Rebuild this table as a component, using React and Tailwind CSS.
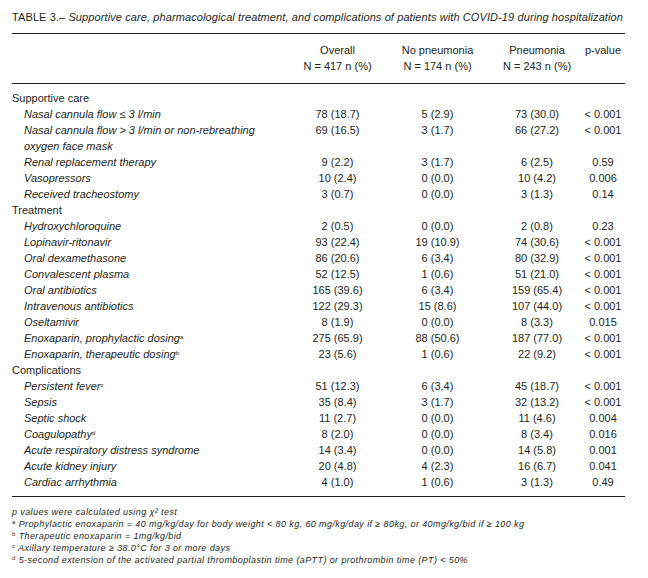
const sections = [
  {
    title: 'Supportive care',
    rows: [
      { label: 'Nasal cannula flow ≤ 3 l/min', v: ['78 (18.7)', '5 (2.9)', '73 (30.0)', '< 0.001'] },
      { label: 'Nasal cannula flow > 3 l/min or non-rebreathing', v: ['69 (16.5)', '3 (1.7)', '66 (27.2)', '< 0.001'] },
      { label: 'oxygen face mask', v: ['', '', '', ''] },
      { label: 'Renal replacement therapy', v: ['9 (2.2)', '3 (1.7)', '6 (2.5)', '0.59'] },
      { label: 'Vasopressors', v: ['10 (2.4)', '0 (0.0)', '10 (4.2)', '0.006'] },
      { label: 'Received tracheostomy', v: ['3 (0.7)', '0 (0.0)', '3 (1.3)', '0.14'] },
    ],
  },
  {
    title: 'Treatment',
    rows: [
      { label: 'Hydroxychloroquine', v: ['2 (0.5)', '0 (0.0)', '2 (0.8)', '0.23'] },
      { label: 'Lopinavir-ritonavir', v: ['93 (22.4)', '19 (10.9)', '74 (30.6)', '< 0.001'] },
      { label: 'Oral dexamethasone', v: ['86 (20.6)', '6 (3.4)', '80 (32.9)', '< 0.001'] },
      { label: 'Convalescent plasma', v: ['52 (12.5)', '1 (0.6)', '51 (21.0)', '< 0.001'] },
      { label: 'Oral antibiotics', v: ['165 (39.6)', '6 (3.4)', '159 (65.4)', '< 0.001'] },
      { label: 'Intravenous antibiotics', v: ['122 (29.3)', '15 (8.6)', '107 (44.0)', '< 0.001'] },
      { label: 'Oseltamivir', v: ['8 (1.9)', '0 (0.0)', '8 (3.3)', '0.015'] },
      { label: 'Enoxaparin, prophylactic dosing', sup: 'a', v: ['275 (65.9)', '88 (50.6)', '187 (77.0)', '< 0.001'] },
      { label: 'Enoxaparin, therapeutic dosing', sup: 'b', v: ['23 (5.6)', '1 (0.6)', '22 (9.2)', '< 0.001'] },
    ],
  },
  {
    title: 'Complications',
    rows: [
      { label: 'Persistent fever', sup: 'c', v: ['51 (12.3)', '6 (3.4)', '45 (18.7)', '< 0.001'] },
      { label: 'Sepsis', v: ['35 (8.4)', '3 (1.7)', '32 (13.2)', '< 0.001'] },
      { label: 'Septic shock', v: ['11 (2.7)', '0 (0.0)', '11 (4.6)', '0.004'] },
      { label: 'Coagulopathy', sup: 'd', v: ['8 (2.0)', '0 (0.0)', '8 (3.4)', '0.016'] },
      { label: 'Acute respiratory distress syndrome', v: ['14 (3.4)', '0 (0.0)', '14 (5.8)', '0.001'] },
      { label: 'Acute kidney injury', v: ['20 (4.8)', '4 (2.3)', '16 (6.7)', '0.041'] },
      { label: 'Cardiac arrhythmia', v: ['4 (1.0)', '1 (0.6)', '3 (1.3)', '0.49'] },
    ],
  },
];

const grid = 'grid grid-cols-[278px_95px_105px_94px_38px] pr-[3px]';

function Sup({ children }) {
  return (
    <span className="relative -top-[3px] text-[6px] leading-none not-italic">{children}</span>
  );
}

function Row({ row }) {
  return (
    <div className={`${grid} h-4 items-center leading-4`}>
      <div className="pl-3 italic whitespace-nowrap">
        {row.label}
        {row.sup && <Sup>{row.sup}</Sup>}
      </div>
      {row.v.map((x, i) => (
        <div key={i} className="text-center whitespace-nowrap">
          {x}
        </div>
      ))}
    </div>
  );
}

export default function App() {
  return (
    <div className="min-h-[578px] w-[648px] bg-white px-3 pt-[9px] text-[#231f20] font-['Liberation_Sans',Arial,sans-serif]">
      <div className="w-[613px]">
        <p className="text-[11px] leading-4 tracking-[0.1px] whitespace-nowrap">
          TABLE 3.– <span className="italic">Supportive care, pharmacological treatment, and complications of patients with COVID-19 during hospitalization</span>
        </p>
        <div className="mt-2 h-px bg-[#231f20]" />

        <div className={`${grid} mt-2 text-[11px] leading-4`}>
          <div />
          <div className="text-center">Overall<br />N = 417 n (%)</div>
          <div className="text-center">No pneumonia<br />N = 174 n (%)</div>
          <div className="text-center">Pneumonia<br />N = 243 n (%)</div>
          <div className="text-center whitespace-nowrap">p-value</div>
        </div>
        <div className="mt-[9px] h-px bg-[#231f20]" />

        <div className="mt-[6px] text-[11px]">
          {sections.map((s) => (
            <div key={s.title}>
              <div className="h-4 leading-4">{s.title}</div>
              {s.rows.map((r) => (
                <Row key={r.label} row={r} />
              ))}
            </div>
          ))}
        </div>
        <div className="mt-[6px] h-px bg-[#231f20]" />

        <div className="mt-[9px] text-[9px] italic leading-3 tracking-[0.4px] whitespace-nowrap">
          <p>p values were calculated using χ² test</p>
          <p><Sup>a</Sup> Prophylactic enoxaparin = 40 mg/kg/day for body weight &lt; 80 kg, 60 mg/kg/day if ≥ 80kg, or 40mg/kg/bid if ≥ 100 kg</p>
          <p><Sup>b</Sup> Therapeutic enoxaparin = 1mg/kg/bid</p>
          <p><Sup>c</Sup> Axillary temperature ≥ 38.0°C for 3 or more days</p>
          <p><Sup>d</Sup> 5-second extension of the activated partial thromboplastin time (aPTT) or prothrombin time (PT) &lt; 50%</p>
        </div>
      </div>
    </div>
  );
}
